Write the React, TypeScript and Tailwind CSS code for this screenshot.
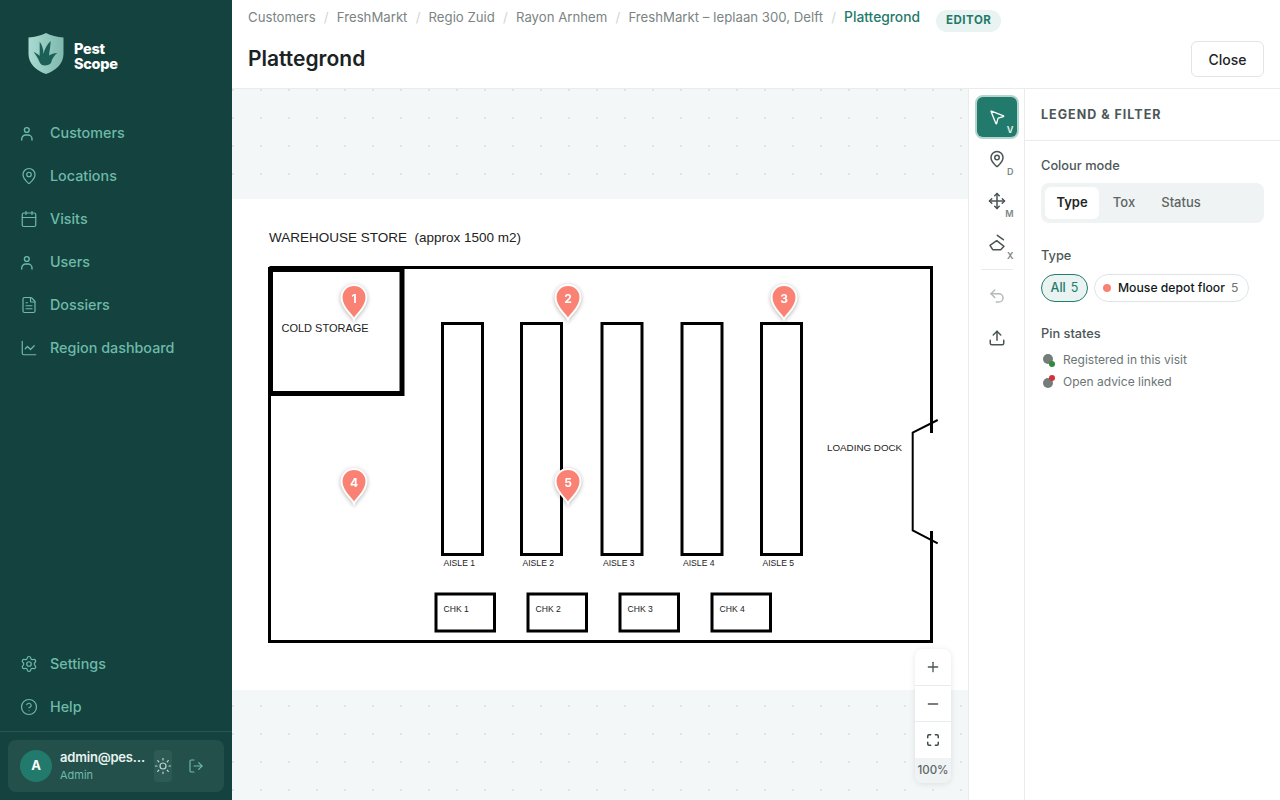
import {
  ChartLine,
  Calendar,
  CircleHelp,
  FileText,
  LogOut,
  MapPin,
  Maximize,
  Minus,
  MousePointer2,
  Move,
  Plus,
  Settings,
  Sun,
  Undo2,
  Upload,
} from "lucide-react";

const crumbs = ["Customers", "FreshMarkt", "Regio Zuid", "Rayon Arnhem", "FreshMarkt – Ieplaan 300, Delft"];

function PersonIcon({ size = 18 }: { size?: number }) {
  return (
    <svg width={size} height={size} viewBox="0 0 18 18" fill="none" stroke="currentColor" strokeWidth="1.4" strokeLinecap="round">
      <circle cx="6.8" cy="6" r="2.4" />
      <path d="M1.7 16 V15 A4 4 0 0 1 5.7 11 H8 A4 4 0 0 1 12 15 V16" />
    </svg>
  );
}

function EraserIcon({ size = 18 }: { size?: number }) {
  return (
    <svg width={size} height={size} viewBox="0 0 18 18" fill="none" stroke="currentColor" strokeWidth="1.5" strokeLinejoin="round" strokeLinecap="round">
      <path d="M2 11.3 L8.7 6.7 L16 12.3 L12.7 15.7 H4.7 Z" />
      <path d="M9.3 1.3 L15.3 5.7" />
    </svg>
  );
}

const topNav = [
  { label: "Customers", icon: PersonIcon },
  { label: "Locations", icon: MapPin },
  { label: "Visits", icon: Calendar },
  { label: "Users", icon: PersonIcon },
  { label: "Dossiers", icon: FileText },
  { label: "Region dashboard", icon: ChartLine },
];

const pins = [
  { n: 1, pos: "left-[108px] top-[85px]" },
  { n: 2, pos: "left-[322px] top-[85px]" },
  { n: 3, pos: "left-[538px] top-[85px]" },
  { n: 4, pos: "left-[108px] top-[269px]" },
  { n: 5, pos: "left-[322px] top-[269px]" },
];

const aisles = [442.5, 521.5, 602, 682, 761.5];
const checkouts = [436, 528, 620, 712];

function Logo() {
  return (
    <svg width="38" height="44" viewBox="0 0 38 44">
      <defs>
        <linearGradient id="shield" x1="0" y1="0" x2="1" y2="0">
          <stop offset="0" stopColor="#a9dad1" />
          <stop offset="1" stopColor="#7fb8ad" />
        </linearGradient>
      </defs>
      <path d="M19 1 C14 3.5 8 5 1.5 5.5 V22 C1.5 32 10 39 19 42 C28 39 36.5 32 36.5 22 V5.5 C30 5 24 3.5 19 1 Z" fill="url(#shield)" />
      <path
        d="M6.5 20 C9 21 11 22 12.5 24 C13 19 12.5 14 12.7 9.7 C15 13 16.5 17 16.5 22 C17.5 17 20 12.5 23.7 9 C23.5 14 22.5 19 22 23.5 C24.5 22 27 21 30.3 21 C27 23.5 25 27 24 31 C22 34 14 35 12.5 30 C11 26 9 23 6.5 20 Z"
        fill="#1c5f56"
      />
    </svg>
  );
}

function Pin({ n, pos }: { n: number; pos: string }) {
  return (
    <div className={`absolute ${pos} w-[28px] h-[37px] drop-shadow-[0_1px_2px_rgba(0,0,0,0.3)]`}>
      <svg width="28" height="37" viewBox="0 0 28 37" className="block">
        <path
          d="M14 35.5 C12.5 30.5 1.5 24.5 1.5 13.5 C1.5 6.5 7 1 14 1 C21 1 26.5 6.5 26.5 13.5 C26.5 24.5 15.5 30.5 14 35.5 Z"
          fill="#fa8274"
          stroke="#ffffff"
          strokeWidth="2"
        />
      </svg>
      <span className="absolute left-0 right-0 top-[6.5px] text-center text-[12px] leading-[16px] font-bold text-white">{n}</span>
    </div>
  );
}

function FloorPlan() {
  return (
    <svg width="736" height="491" viewBox="232 199 736 491" className="block bg-white" fontFamily="'Liberation Sans', Arial, sans-serif">
      <g fill="none" stroke="#000000" strokeWidth="3">
        <path d="M269.5 396 V641.5 H931.5 V531" />
        <path d="M269.5 267.5 H931.5 V433" />
        <rect x="270.5" y="269.5" width="131.5" height="124" strokeWidth="5" />
        {aisles.map((x) => (
          <rect key={x} x={x} y="323.5" width="40" height="231" />
        ))}
        {checkouts.map((x) => (
          <rect key={x} x={x} y="594" width="58.5" height="37" />
        ))}
        <path d="M937.7 420 L912.7 432.5 V530.5 L937.7 543.3" strokeWidth="2" />
      </g>
      <g fill="#222222">
        <text x="269" y="242" fontSize="13.5" xmlSpace="preserve">WAREHOUSE STORE  (approx 1500 m2)</text>
        <text x="281.5" y="332" fontSize="11">COLD STORAGE</text>
        <text x="827" y="451" fontSize="9.8">LOADING DOCK</text>
        {aisles.map((x, i) => (
          <text key={x} x={x + 1} y="566" fontSize="8.6">{`AISLE ${i + 1}`}</text>
        ))}
        {checkouts.map((x, i) => (
          <text key={x} x={x + 7.5} y="612" fontSize="8.6">{`CHK ${i + 1}`}</text>
        ))}
      </g>
    </svg>
  );
}

function ToolButton({ icon: Icon, hint, disabled }: { icon: React.ComponentType<{ size?: number }>; hint?: string; disabled?: boolean }) {
  return (
    <button className={`relative w-[40px] h-[40px] flex items-center justify-center ${disabled ? "text-[#b4baba]" : "text-[#4b5555]"}`}>
      <Icon size={18} />
      {hint && <span className="absolute right-[3px] bottom-[2px] text-[9px] leading-[10px] font-semibold text-[#7b8585]">{hint}</span>}
    </button>
  );
}

function NavItem({ label, icon: Icon, size = 18 }: { label: string; icon: React.ComponentType<{ size?: number; strokeWidth?: number }>; size?: number }) {
  return (
    <a className="h-[43px] pl-[20px] flex items-center gap-[12px] text-[14.35px] font-medium text-[#6dbaa9]">
      <span className="w-[18px] flex justify-center">
        <Icon size={size} strokeWidth={1.6} />
      </span>
      {label}
    </a>
  );
}

export default function App() {
  return (
    <div className="flex h-screen w-full overflow-hidden bg-white font-['Inter',sans-serif] text-[#1d2526]">
      <aside className="w-[232px] shrink-0 flex flex-col bg-[#14423e]">
        <div className="h-[111px] pl-[27px] pt-[32px] flex items-start gap-[9px]">
          <Logo />
          <div className="pt-[8.5px] text-[14.5px] leading-[15.5px] font-extrabold text-white tracking-[-0.3px]">
            Pest
            <br />
            Scope
          </div>
        </div>
        <nav className="flex flex-col">
          {topNav.map((item) => (
            <NavItem key={item.label} label={item.label} icon={item.icon} />
          ))}
        </nav>
        <div className="mt-auto flex flex-col pb-[3px]">
          <NavItem label="Settings" icon={Settings} size={20} />
          <NavItem label="Help" icon={CircleHelp} />
        </div>
        <div className="border-t border-[#2a5651] px-[8px] pt-[8px] pb-[8px]">
          <div className="h-[52px] rounded-[8px] bg-[#24504b] pl-[12px] flex items-center">
            <div className="w-[32px] h-[32px] shrink-0 rounded-full bg-[#217a6b] flex items-center justify-center text-[13px] font-bold text-white">A</div>
            <div className="ml-[8px] w-[86px] shrink-0">
              <div className="truncate text-[13px] leading-[17px] font-semibold tracking-[-0.2px] text-[#e8f3f0]">admin@pestscope.nl</div>
              <div className="mt-[1px] text-[11px] leading-[16px] text-[#6dbaa9]">Admin</div>
            </div>
            <button className="ml-[8px] w-[18px] h-[32px] rounded-[4px] bg-[#2d5a55] flex items-center justify-center text-[#b9d6cf]">
              <Sun size={18} strokeWidth={1.6} className="shrink-0" />
            </button>
            <button className="ml-[16px] text-[#6dbaa9]">
              <LogOut size={16} strokeWidth={1.75} />
            </button>
          </div>
        </div>
      </aside>

      <main className="flex-1 min-w-0 flex flex-col">
        <header className="h-[89px] shrink-0 border-b border-[#e8ecec] pl-[16px] pr-[16px] relative">
          <div className="h-[35px] flex items-center text-[13.2px] text-[#7b8483]">
            {crumbs.map((c) => (
              <span key={c} className="flex items-center">
                {c}
                <span className="mx-[8.2px] text-[#cfd5d5]">/</span>
              </span>
            ))}
            <span className="text-[13.8px] font-medium text-[#1f7a6c]">Plattegrond</span>
            <span className="ml-[16px] mt-[6px] h-[22px] px-[10px] rounded-full bg-[#e9f3f1] flex items-center text-[11.5px] font-bold tracking-[0.5px] text-[#1f7a6c]">EDITOR</span>
          </div>
          <div className="flex items-center justify-between mt-[5px]">
            <h1 className="text-[21px] leading-[38px] font-semibold text-[#1a2224]">Plattegrond</h1>
            <button className="w-[73px] h-[36px] rounded-[6px] border border-[#e0e5e5] text-[14px] font-medium text-[#1d2526]">Close</button>
          </div>
        </header>

        <div className="flex-1 min-h-0 flex">
          <div className="relative flex-1 min-w-0 flex items-center bg-[#f3f7f7] bg-[radial-gradient(circle_at_1px_1px,#e0e6e6_1px,transparent_0)] bg-[length:28px_28px]">
            <div className="relative">
              <FloorPlan />
              {pins.map((p) => (
                <Pin key={p.n} n={p.n} pos={p.pos} />
              ))}
            </div>
            <div className="absolute left-[683px] top-[560px] w-[36px] rounded-[8px] overflow-hidden bg-white shadow-[0_1px_6px_rgba(0,0,0,0.1)] flex flex-col text-[#4b5555]">
              <button className="h-[37px] flex items-center justify-center border-b border-[#e8ecec]"><Plus size={16} /></button>
              <button className="h-[36px] flex items-center justify-center border-b border-[#e8ecec]"><Minus size={16} /></button>
              <button className="h-[36px] flex items-center justify-center text-[#3f4848]"><Maximize size={14} strokeWidth={2.5} /></button>
              <div className="h-[25px] flex items-center justify-center bg-[#f0f3f3] text-[11.5px] font-medium text-[#5c6666]">100%</div>
            </div>
          </div>

          <div className="w-[57px] shrink-0 border-x border-[#e8ecec] bg-white flex flex-col items-center pt-[8px]">
            <button className="relative w-[40px] h-[40px] rounded-[6px] bg-[#217a6b] ring-[2px] ring-[#b2d6ce] flex items-center justify-center text-white">
              <MousePointer2 size={18} strokeWidth={1.75} />
              <span className="absolute right-[3px] bottom-[2px] text-[9px] leading-[10px] font-bold text-[#d5ebe6]">V</span>
            </button>
            <div className="mt-[2px] flex flex-col items-center gap-[2px]">
              <ToolButton icon={MapPin} hint="D" />
              <ToolButton icon={Move} hint="M" />
              <ToolButton icon={EraserIcon} hint="X" />
            </div>
            <div className="w-[32px] h-px bg-[#e8ecec] mt-[6px] mb-[6px]" />
            <ToolButton icon={Undo2} disabled />
            <div className="mt-[2px]">
              <ToolButton icon={Upload} />
            </div>
          </div>

          <div className="w-[255px] shrink-0 bg-white">
            <div className="h-[52px] border-b border-[#e8ecec] px-[16px] pt-[2px] flex items-center text-[12.5px] font-bold tracking-[1px] text-[#4d5758]">LEGEND &amp; FILTER</div>
            <div className="px-[16px] pt-[16px]">
              <div className="text-[12.8px] leading-[18px] font-medium text-[#4d5758]">Colour mode</div>
              <div className="mt-[8px] h-[40px] rounded-[8px] bg-[#f0f3f3] p-[4px] flex items-center">
                <div className="w-[54px] h-[32px] rounded-[6px] bg-white flex items-center justify-center text-[13px] font-semibold text-[#1d2526]">Type</div>
                <div className="w-[50px] text-center text-[13px] font-medium text-[#5c6666]">Tox</div>
                <div className="w-[64px] text-center text-[13px] font-medium text-[#5c6666]">Status</div>
              </div>
              <div className="mt-[24px] text-[12.8px] leading-[18px] font-medium text-[#4d5758]">Type</div>
              <div className="mt-[9px] flex gap-[6px]">
                <div className="h-[28px] w-[47px] justify-center rounded-full border border-[#217a6b] bg-[#e9f3f1] flex items-center gap-[5px] text-[12.5px] font-medium text-[#1f7a6c]">
                  All <span className="font-normal">5</span>
                </div>
                <div className="h-[28px] pl-[8px] pr-[10px] rounded-full border border-[#dfe4e4] flex items-center text-[12.2px] font-medium text-[#111819]">
                  <span className="w-[8px] h-[8px] rounded-full bg-[#fa8274] mr-[7px]" />
                  Mouse depot floor
                  <span className="ml-[6px] font-normal text-[#6b7575]">5</span>
                </div>
              </div>
              <div className="mt-[23px] text-[12.8px] leading-[18px] font-medium text-[#4d5758]">Pin states</div>
              <div className="mt-[8px] flex flex-col gap-[4px] text-[12px] leading-[18px] text-[#6b7575]">
                <div className="flex items-center gap-[8px]">
                  <span className="relative w-[14px] h-[14px] shrink-0">
                    <span className="absolute left-[2px] top-[1px] w-[10px] h-[10px] rounded-full bg-[#737d7a]" />
                    <span className="absolute right-0 bottom-0 w-[6px] h-[6px] rounded-full bg-[#2e8b3a]" />
                  </span>
                  Registered in this visit
                </div>
                <div className="flex items-center gap-[8px]">
                  <span className="relative w-[14px] h-[14px] shrink-0">
                    <span className="absolute left-[2px] bottom-[1px] w-[10px] h-[10px] rounded-full bg-[#737d7a]" />
                    <span className="absolute right-0 top-0 w-[6px] h-[6px] rounded-full bg-[#d13438]" />
                  </span>
                  Open advice linked
                </div>
              </div>
            </div>
          </div>
        </div>
      </main>
    </div>
  );
}
